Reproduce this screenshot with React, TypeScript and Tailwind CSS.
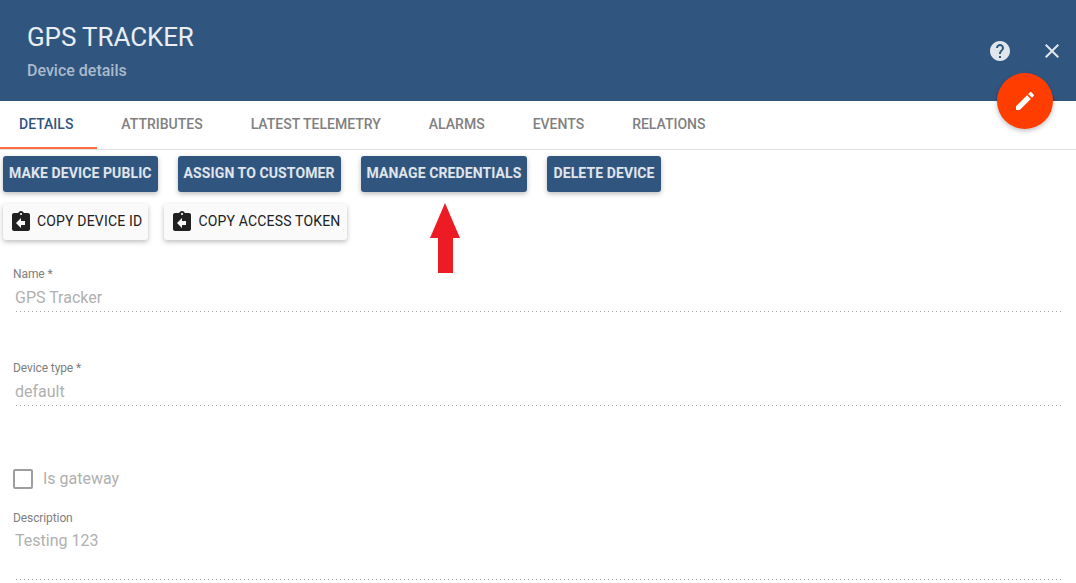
import { type ReactElement } from "react";

const font = { fontFamily: "Roboto, sans-serif" };

const TABS = ["Details", "Attributes", "Latest telemetry", "Alarms", "Events", "Relations"];
const ACTIONS = ["Make device public", "Assign to customer", "Manage credentials", "Delete device"];
const COPIES = ["Copy device ID", "Copy access token"];

function CopyIcon(): ReactElement {
  return (
    <svg viewBox="0 0 24 24" className="h-6 w-6 fill-[#212121]">
      <path d="M19 3h-4.18C14.4 1.84 13.3 1 12 1c-1.3 0-2.4.84-2.82 2H5c-1.1 0-2 .9-2 2v14c0 1.1.9 2 2 2h14c1.1 0 2-.9 2-2V5c0-1.1-.9-2-2-2zm-7 0c.55 0 1 .45 1 1s-.45 1-1 1-1-.45-1-1 .45-1 1-1zm4 12h-4v3l-5-5 5-5v3h4v4z" />
    </svg>
  );
}

interface FieldProps {
  label: string;
  value: string;
  className: string;
  valueClassName: string;
}

function Field({ label, value, className, valueClassName }: FieldProps): ReactElement {
  return (
    <div className={className}>
      <p className="text-[12px] leading-[14px] tracking-[-0.1px] text-[#808080]">{label}</p>
      <p className={valueClassName}>{value}</p>
    </div>
  );
}

export default function App(): ReactElement {
  return (
    <div style={font} className="relative h-[583px] w-[1076px] overflow-hidden bg-white">
      <header className="relative h-[101px] bg-[#305680] pl-[27px] pt-[21px]">
        <h1 className="text-[26px] leading-[32px] tracking-[-0.1px] text-white/90">GPS TRACKER</h1>
        <p className="mt-[8px] text-[16px] font-medium leading-[20px] text-white/60">Device details</p>
        <div className="absolute left-[988px] top-[39px] flex items-center gap-[28px]">
          <svg viewBox="0 0 24 24" className="h-6 w-6 fill-white/85">
            <path d="M12 2C6.48 2 2 6.48 2 12s4.48 10 10 10 10-4.48 10-10S17.52 2 12 2zm1 17h-2v-2h2v2zm2.07-7.75l-.9.92C13.45 12.9 13 13.5 13 15h-2v-.5c0-1.1.45-2.1 1.17-2.83l1.24-1.26c.37-.36.59-.86.59-1.41 0-1.1-.9-2-2-2s-2 .9-2 2H8c0-2.21 1.79-4 4-4s4 1.79 4 4c0 .88-.36 1.68-.93 2.25z" />
          </svg>
          <svg viewBox="0 0 24 24" className="h-6 w-6 fill-white/85">
            <path d="M19 6.41L17.59 5 12 10.59 6.41 5 5 6.41 10.59 12 5 17.59 6.41 19 12 13.41 17.59 19 19 17.59 13.41 12z" />
          </svg>
        </div>
      </header>

      <button className="absolute left-[997px] top-[73px] z-10 flex h-14 w-14 items-center justify-center rounded-full bg-[#ff3d00] shadow-[0_2px_5px_rgba(0,0,0,0.26)]">
        <svg viewBox="0 0 24 24" className="h-6 w-6 fill-white">
          <path d="M3 17.25V21h3.75L17.81 9.94l-3.75-3.75L3 17.25zM20.71 7.04c.39-.39.39-1.02 0-1.41l-2.34-2.34c-.39-.39-1.02-.39-1.41 0l-1.83 1.83 3.75 3.75 1.83-1.83z" />
        </svg>
      </button>

      <nav className="flex h-[49px] border-b border-[#e0e0e0]">
        <div className="ml-[-5px] flex">
          {TABS.map((tab, i) => (
            <div
              key={tab}
              className={
                i === 0
                  ? "flex h-[48px] items-center border-b-2 border-[#ff6e40] px-6 text-[14px] font-medium uppercase text-[#305680]"
                  : "flex h-[48px] items-center px-6 pb-[2px] text-[14px] font-medium uppercase text-[#808080]"
              }
            >
              {tab}
            </div>
          ))}
        </div>
      </nav>

      <div className="flex gap-5 pl-[3px] pt-[6px]">
        {ACTIONS.map((action) => (
          <button
            key={action}
            className="h-9 rounded-[3px] bg-[#305680] px-[6px] pb-[2px] text-[14px] font-bold uppercase tracking-[0.1px] text-white/85 shadow-[0_2px_5px_rgba(0,0,0,0.26)]"
          >
            {action}
          </button>
        ))}
      </div>

      <div className="flex gap-4 pl-[3px] pt-[12px]">
        {COPIES.map((copy) => (
          <button
            key={copy}
            className="flex h-9 items-center gap-[4px] rounded-[3px] bg-[#fafafa] px-[6px] text-[14px] font-normal uppercase tracking-[0.18px] text-[#212121] shadow-[0_2px_5px_rgba(0,0,0,0.26)]"
          >
            <CopyIcon />
            <span className="pb-[2px]">{copy}</span>
          </button>
        ))}
      </div>

      <div className="relative px-[13px]">
        <Field
          label="Name *"
          value="GPS Tracker"
          className="mt-[27px] h-[45px] bg-[linear-gradient(to_right,#aaa_1px,transparent_1px)] bg-[length:4px_1px] bg-bottom bg-repeat-x"
          valueClassName="mt-[7px] pl-[2px] text-[16px] leading-[20px] text-[#b0b0b0]"
        />
        <Field
          label="Device type *"
          value="default"
          className="mt-[49px] h-[45px] bg-[linear-gradient(to_right,#aaa_1px,transparent_1px)] bg-[length:4px_1px] bg-bottom bg-repeat-x"
          valueClassName="mt-[7px] pl-[2px] text-[16px] leading-[20px] text-[#b0b0b0]"
        />
        <div className="mt-[61px] flex items-center gap-[10px]">
          <span className="h-5 w-5 rounded-[2px] border-2 border-[#9e9e9e]" />
          <span className="text-[16px] text-[#b0b0b0]">Is gateway</span>
        </div>
        <Field
          label="Description"
          value="Testing 123"
          className="mt-[20px] h-[69px] bg-[linear-gradient(to_right,#aaa_1px,transparent_1px)] bg-[length:4px_1px] bg-bottom bg-repeat-x"
          valueClassName="mt-[6px] pl-[2px] text-[16px] leading-[20px] text-[#b0b0b0]"
        />
      </div>

      <svg viewBox="0 0 30 70" className="absolute left-[430px] top-[203px] h-[70px] w-[30px] fill-[#ed1c24]">
        <path d="M15 0L30 35H23V70H8V35H0z" />
      </svg>
    </div>
  );
}
